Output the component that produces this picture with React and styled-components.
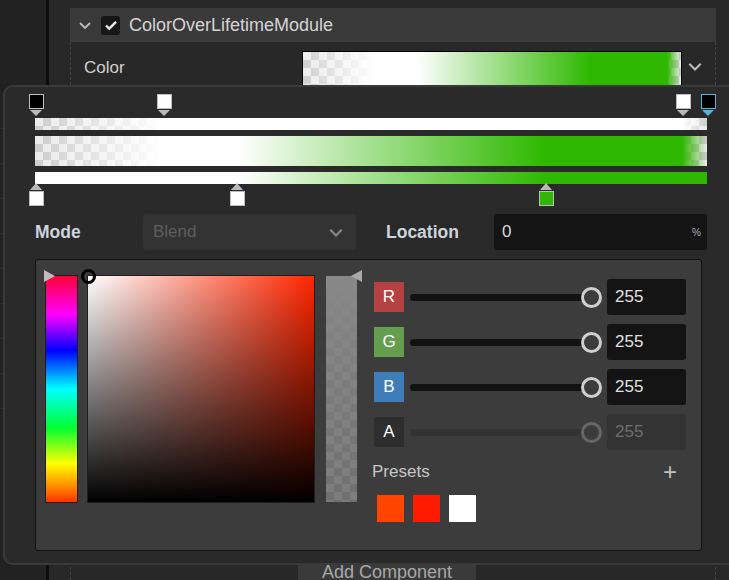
import React from "react";
import styled, { createGlobalStyle } from "styled-components";

const GREEN = "#2eb800";

const GlobalStyle = createGlobalStyle`
  html, body {
    margin: 0;
    padding: 0;
    background: #262626;
    font-family: "Liberation Sans", Arial, sans-serif;
    overflow: hidden;
  }
  * { box-sizing: border-box; }
`;

const checker = (a, b, size) => `
  background-color: ${a};
  background-image: conic-gradient(${a} 25%, ${b} 0 50%, ${a} 0 75%, ${b} 0);
  background-size: ${size * 2}px ${size * 2}px;
`;

const Page = styled.div`
  position: relative;
  width: 729px;
  height: 580px;
  display: flex;
  overflow: hidden;
`;

const Scene = styled.div`
  width: 46px;
  background: #222222;
  display: flex;
  flex-direction: column;
  padding-top: 128px;
  gap: 34px;
`;

const SceneLine = styled.div`
  height: 1px;
  background: #2e2e2e;
`;

const Split = styled.div`
  width: 3px;
  background: #0d0d0d;
`;

const Inspector = styled.div`
  flex: 1;
  background: #282828;
  padding: 8px 13px 0 21px;
  display: flex;
  flex-direction: column;
`;

const ModuleHeader = styled.div`
  height: 34px;
  background: #3a3a3a;
  display: flex;
  align-items: center;
  padding-left: 8px;
  gap: 9px;
  color: #d4d4d4;
  font-size: 18px;
`;

const Check = styled.div`
  width: 19px;
  height: 19px;
  border-radius: 3px;
  background: #171717;
  display: flex;
  align-items: center;
  justify-content: center;
`;

const ModuleBody = styled.div`
  border-left: 1px dashed #444;
  border-right: 1px dashed #444;
  height: 538px;
  display: flex;
  flex-direction: column;
`;

const FieldRow = styled.div`
  display: flex;
  align-items: center;
  height: 52px;
  padding-left: 13px;
  color: #d0d0d0;
  font-size: 17px;
`;

const FieldLabel = styled.div`
  width: 218px;
`;

const GradientField = styled.div`
  width: 380px;
  height: 35px;
  border: 1px solid #000;
  position: relative;
  ${checker("#cfcfcf", "#ececec", 8)}
  &::after {
    content: "";
    position: absolute;
    inset: 0;
    background: linear-gradient(to right, rgba(255,255,255,0) 0%, #fff 19%, #fff 30%, ${GREEN} 76%, ${GREEN} 96.3%, rgba(46,184,0,0) 100%);
  }
`;

const AddRow = styled.div`
  margin-top: auto;
  display: flex;
  justify-content: center;
  padding-right: 12px;
`;

const AddButton = styled.div`
  width: 178px;
  height: 22px;
  background: #3a3a3a;
  color: #a8a8a8;
  font-size: 18px;
  padding: 0 0 0 24px;
  margin-bottom: -4px;
`;

/* popup over the inspector */
const Popup = styled.div`
  position: absolute;
  left: 3px;
  top: 85px;
  width: 740px;
  height: 480px;
  background: #2a2a2a;
  border: 2px solid #3a3a3a;
  border-radius: 10px;
  padding: 7px 0 0 30px;
  display: flex;
  flex-direction: column;
`;

const Track = styled.div`
  position: relative;
  width: 672px;
  height: ${({ h }) => h}px;
`;

const StopSquare = styled.div`
  position: absolute;
  left: ${({ at }) => at}px;
  ${({ down }) => (down ? "top: 0;" : "bottom: 0;")}
  width: 15px;
  height: 15px;
  transform: translateX(-7px);
  background: ${({ c }) => c};
  border: 1px solid ${({ sel }) => (sel ? "#59b4d9" : "#bdbdbd")};
  &::after {
    content: "";
    position: absolute;
    left: 0;
    ${({ down }) => (down ? "top: 15px;" : "bottom: 15px;")}
    border-left: 6.5px solid transparent;
    border-right: 6.5px solid transparent;
    ${({ down, sel }) =>
      down
        ? `border-top: 6px solid ${sel ? "#59b4d9" : "#b9b9b9"};`
        : "border-bottom: 7px solid #b9b9b9;"}
  }
`;

const AlphaBar = styled.div`
  width: 672px;
  height: 12px;
  position: relative;
  ${checker("#cdcdcd", "#ebebeb", 8)}
  &::after {
    content: "";
    position: absolute;
    inset: 0;
    background: linear-gradient(to right, rgba(255,255,255,0) 0%, #fff 19%, #fff 96.3%, rgba(255,255,255,0) 100%);
  }
`;

const MainBar = styled(AlphaBar)`
  height: 30px;
  margin-top: 6px;
  &::after {
    background: linear-gradient(to right, rgba(255,255,255,0) 0%, #fff 19%, #fff 30%, ${GREEN} 76%, ${GREEN} 96.3%, rgba(46,184,0,0) 100%);
  }
`;

const ColorBar = styled.div`
  width: 672px;
  height: 12px;
  margin-top: 6px;
  background: linear-gradient(to right, #fff 0%, #fff 30%, ${GREEN} 76%, ${GREEN} 100%);
`;

const ModeRow = styled.div`
  display: flex;
  align-items: center;
  margin-top: 8px;
  width: 672px;
`;

const BoldLabel = styled.div`
  width: ${({ w }) => w}px;
  font-weight: bold;
  font-size: 17.5px;
  color: #cdd4dc;
`;

const Select = styled.div`
  width: 213px;
  height: 36px;
  border-radius: 3px;
  background: #333333;
  color: #5e5e5e;
  font-size: 17px;
  display: flex;
  align-items: center;
  justify-content: space-between;
  padding: 0 12px 0 10px;
  margin-right: 30px;
`;

const NumInput = styled.div`
  flex: 1;
  height: 36px;
  border-radius: 3px;
  background: #141414;
  color: #d8d8d8;
  font-size: 17px;
  display: flex;
  align-items: center;
  justify-content: space-between;
  padding: 0 6px 0 8px;
`;

const Unit = styled.span`
  font-size: 10px;
  color: #aaa;
`;

const PickerPanel = styled.div`
  width: 667px;
  height: 292px;
  margin-top: 9px;
  background: #3c3c3c;
  border: 1px solid #111;
  border-radius: 3px;
  display: flex;
  padding: 15px 0 0 9px;
`;

const Strip = styled.div`
  position: relative;
  width: 33px;
  height: 228px;
  border: 1px solid #1e1e1e;
  &::before {
    content: "";
    position: absolute;
    top: -6px;
    ${({ side }) => (side === "left" ? "left: -2px;" : "right: -5px;")}
    border-top: 6px solid transparent;
    border-bottom: 6px solid transparent;
    ${({ side }) =>
      side === "left" ? "border-left: 11px solid #bdbdbd;" : "border-right: 11px solid #a9a9a9;"}
  }
`;

const HueStrip = styled(Strip)`
  background: linear-gradient(to bottom, #ff0033 0%, #ff00ff 17%, #0000ff 33%, #00ffff 50%, #00ff33 67%, #ffff00 83%, #ff9900 92%, #ff3300 100%);
`;

const AlphaStrip = styled(Strip)`
  margin-left: 10px;
  background-color: #6f6f6f;
  background-image: linear-gradient(to bottom, #888 0%, rgba(136,136,136,0) 100%),
    conic-gradient(#6f6f6f 25%, #7d7d7d 0 50%, #6f6f6f 0 75%, #7d7d7d 0);
  background-size: 100% 100%, 16px 16px;
  border-color: #3c3c3c;
`;

const SVBox = styled.div`
  position: relative;
  width: 228px;
  height: 228px;
  margin-left: 9px;
  border: 1px solid #1e1e1e;
  background: linear-gradient(to top, #000, rgba(0,0,0,0)),
    linear-gradient(to right, #fff, #ff2600);
`;

const SVMarker = styled.div`
  position: absolute;
  left: -7px;
  top: -7px;
  width: 15px;
  height: 15px;
  border-radius: 50%;
  border: 3px solid #000;
`;

const Channels = styled.div`
  margin-left: 14px;
  padding-top: 4px;
  width: 315px;
  display: flex;
  flex-direction: column;
  gap: 9px;
`;

const ChannelRow = styled.div`
  display: flex;
  align-items: center;
  height: 36px;
`;

const ChannelTag = styled.div`
  width: 30px;
  height: 30px;
  margin-left: 2px;
  background: ${({ c }) => c};
  color: #fff;
  font-size: 17px;
  display: flex;
  align-items: center;
  justify-content: center;
`;

const Slider = styled.div`
  position: relative;
  width: 185px;
  height: 7px;
  margin-left: 6px;
  border-radius: 4px;
  background: ${({ off }) => (off ? "#333" : "#121212")};
`;

const Thumb = styled.div`
  position: absolute;
  right: -7px;
  top: -7px;
  width: 21px;
  height: 21px;
  border-radius: 50%;
  background: #3c3c3c;
  border: 3px solid ${({ off }) => (off ? "#666" : "#cfcfcf")};
`;

const ChannelValue = styled.div`
  width: 79px;
  height: 36px;
  margin-left: 12px;
  border-radius: 3px;
  background: ${({ off }) => (off ? "#333" : "#141414")};
  color: ${({ off }) => (off ? "#6e6e6e" : "#e0e0e0")};
  font-size: 17px;
  display: flex;
  align-items: center;
  padding-left: 8px;
`;

const PresetHead = styled.div`
  display: flex;
  justify-content: space-between;
  align-items: center;
  color: #c6c6c6;
  font-size: 17px;
  margin-top: 1px;
  padding-right: 10px;
`;

const Plus = styled.span`
  font-size: 24px;
  font-weight: 300;
  color: #c0c0c0;
  line-height: 1;
`;

const Swatches = styled.div`
  display: flex;
  gap: 9px;
  padding-left: 5px;
  margin-top: 2px;
`;

const Swatch = styled.div`
  width: 27px;
  height: 27px;
  background: ${({ c }) => c};
`;

const Chevron = ({ size = 14, color = "#bdbdbd" }) => (
  <svg width={size} height={size} viewBox="0 0 14 14">
    <path d="M2 5l5 5 5-5" fill="none" stroke={color} strokeWidth="1.8" />
  </svg>
);

const alphaStops = [
  { at: 1, c: "#000" },
  { at: 129, c: "#fff" },
  { at: 648, c: "#fff" },
  { at: 673, c: "#000", sel: true },
];
const colorStops = [
  { at: 1, c: "#fff" },
  { at: 202, c: "#fff" },
  { at: 511, c: GREEN },
];
const channels = [
  { k: "R", c: "#b54140" },
  { k: "G", c: "#669e4f" },
  { k: "B", c: "#3e7db8" },
  { k: "A", c: "#2e2e2e", off: true },
];
const presets = ["#ff4500", "#ff1a00", "#ffffff"];

export default function App() {
  return (
    <Page>
      <GlobalStyle />
      <Scene>
        {[0, 1, 2, 3, 4, 5, 6, 7, 8].map((i) => (
          <SceneLine key={i} />
        ))}
      </Scene>
      <Split />
      <Inspector>
        <ModuleHeader>
          <Chevron />
          <Check>
            <svg width="14" height="14" viewBox="0 0 14 14">
              <path d="M2 7.5l3.2 3.2L12 3.8" fill="none" stroke="#e8e8e8" strokeWidth="2.4" />
            </svg>
          </Check>
          ColorOverLifetimeModule
        </ModuleHeader>
        <ModuleBody>
          <FieldRow>
            <FieldLabel>Color</FieldLabel>
            <GradientField />
            <span style={{ marginLeft: 5 }}>
              <Chevron size={16} />
            </span>
          </FieldRow>
          <AddRow>
            <AddButton>Add Component</AddButton>
          </AddRow>
        </ModuleBody>
      </Inspector>

      <Popup>
        <Track h={24}>
          {alphaStops.map((s, i) => (
            <StopSquare key={i} down at={s.at} c={s.c} sel={s.sel} />
          ))}
        </Track>
        <AlphaBar />
        <MainBar />
        <ColorBar />
        <Track h={22}>
          {colorStops.map((s, i) => (
            <StopSquare key={i} at={s.at} c={s.c} />
          ))}
        </Track>
        <ModeRow>
          <BoldLabel w={108}>Mode</BoldLabel>
          <Select>
            Blend
            <Chevron size={16} color="#8a8a8a" />
          </Select>
          <BoldLabel w={108}>Location</BoldLabel>
          <NumInput>
            0<Unit>%</Unit>
          </NumInput>
        </ModeRow>
        <PickerPanel>
          <HueStrip side="left" />
          <SVBox>
            <SVMarker />
          </SVBox>
          <AlphaStrip side="right" />
          <Channels>
            {channels.map((ch) => (
              <ChannelRow key={ch.k}>
                <ChannelTag c={ch.c}>{ch.k}</ChannelTag>
                <Slider off={ch.off}>
                  <Thumb off={ch.off} />
                </Slider>
                <ChannelValue off={ch.off}>255</ChannelValue>
              </ChannelRow>
            ))}
            <PresetHead>
              Presets
              <Plus>+</Plus>
            </PresetHead>
            <Swatches>
              {presets.map((c) => (
                <Swatch key={c} c={c} />
              ))}
            </Swatches>
          </Channels>
        </PickerPanel>
      </Popup>
    </Page>
  );
}
